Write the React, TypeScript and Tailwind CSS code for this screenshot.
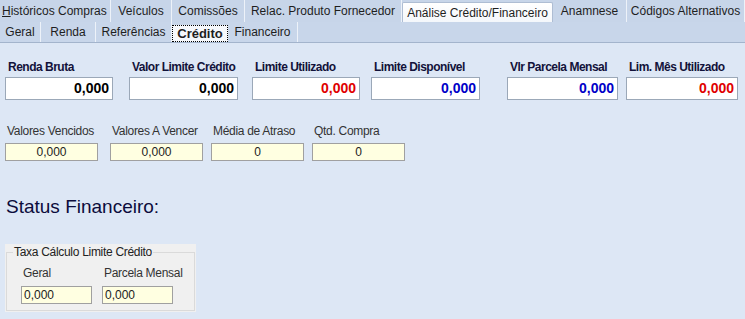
const font = { fontFamily: '"Liberation Sans", Arial, sans-serif' };

const topTabs = [
  { label: "Históricos Compras", w: "w-[111px]", first: true },
  { label: "Veículos", w: "w-[61px]" },
  { label: "Comissões", w: "w-[73px]" },
  { label: "Relac. Produto Fornecedor", w: "w-[157px]" },
  { label: "Análise Crédito/Financeiro", w: "w-[151px]", active: true },
  { label: "Anamnese", w: "w-[74px]" },
  { label: "Códigos Alternativos", w: "w-[118px]" },
];

const subTabs = [
  { label: "Geral", w: "w-[41px]" },
  { label: "Renda", w: "w-[55px]" },
  { label: "Referências", w: "w-[76px]" },
  { label: "Crédito", w: "w-[56px]", active: true },
  { label: "Financeiro", w: "w-[70px]" },
];

const mainFields = [
  { label: "Renda Bruta", w: "w-[108px]", ml: "ml-[5px]", color: "text-black" },
  { label: "Valor Limite Crédito", w: "w-[109px]", ml: "ml-[16px]", color: "text-black" },
  { label: "Limite Utilizado", w: "w-[108px]", ml: "ml-[14px]", color: "text-[#e00000]" },
  { label: "Limite Disponível", w: "w-[109px]", ml: "ml-[11px]", color: "text-[#0000c8]" },
  { label: "Vlr Parcela Mensal", w: "w-[111px]", ml: "ml-[27px]", color: "text-[#0000c8]" },
  { label: "Lim. Mês Utilizado", w: "w-[112px]", ml: "ml-[8px]", color: "text-[#e00000]" },
];

const infoFields = [
  { label: "Valores Vencidos", value: "0,000", ml: "ml-[5px]" },
  { label: "Valores A Vencer", value: "0,000", ml: "ml-[12px]" },
  { label: "Média de Atraso", value: "0", ml: "ml-[8px]" },
  { label: "Qtd. Compra", value: "0", ml: "ml-[8px]" },
];

export default function App() {
  return (
    <div className="w-[745px] h-[319px] overflow-hidden bg-[#dde7f5] text-[#1e1e1e]" style={font}>
      {/* abas principais */}
      <div className="flex h-[22px] bg-[#c7d5e9] text-[12px]">
        {topTabs.map((t) =>
          t.active ? (
            <div
              key={t.label}
              className={`${t.w} mt-[2px] flex items-center justify-center bg-gradient-to-b from-white to-[#f4f7fb] border-x border-t border-[#aebdd3] rounded-t-[2px]`}
            >
              {t.label}
            </div>
          ) : (
            <div
              key={t.label}
              className={`${t.w} flex items-center ${t.first ? "pl-[2px]" : "justify-center"} border-r border-[#edf2f9]`}
            >
              {t.first ? (
                <span>
                  <span className="underline">H</span>istóricos Compras
                </span>
              ) : (
                t.label
              )}
            </div>
          )
        )}
      </div>

      {/* sub abas */}
      <div className="flex h-[21px] bg-[#c8d6ea] border-b border-[#a3b4cc] text-[12px]">
        {subTabs.map((t) =>
          t.active ? (
            <div
              key={t.label}
              className={`${t.w} mt-[3px] flex items-center justify-center bg-[#f6f8fc] outline-1 outline-dotted outline-black -outline-offset-1 font-bold text-[13px]`}
            >
              {t.label}
            </div>
          ) : (
            <div
              key={t.label}
              className={`${t.w} flex items-center justify-center border-r border-[#edf2f9]`}
            >
              {t.label}
            </div>
          )
        )}
      </div>

      {/* limites */}
      <div className="flex pt-[17px]">
        {mainFields.map((f) => (
          <div key={f.label} className={`${f.ml} ${f.w} flex flex-col`}>
            <div className="pl-[3px] h-[14px] leading-[14px] text-[12px] font-bold tracking-[-0.5px] text-[#12123a] whitespace-nowrap">
              {f.label}
            </div>
            <div
              className={`mt-[3px] h-[23px] bg-white border border-[#9ba8b8] flex items-center justify-end pr-[3px] text-[14px] font-bold ${f.color}`}
            >
              0,000
            </div>
          </div>
        ))}
      </div>

      {/* valores */}
      <div className="flex mt-[24px]">
        {infoFields.map((f) => (
          <div key={f.label} className={`${f.ml} w-[93px] flex flex-col`}>
            <div className="pl-[2px] h-[14px] leading-[14px] text-[12px] text-[#333] tracking-[-0.3px] whitespace-nowrap">
              {f.label}
            </div>
            <div className="mt-[5px] h-[18px] bg-[#ffffe1] border border-[#a0a0a0] flex items-center justify-center text-[12px] text-[#222]">
              {f.value}
            </div>
          </div>
        ))}
      </div>

      <div className="mt-[35px] ml-[6px] h-[22px] leading-[22px] text-[19px] text-[#0c0c3c]">
        Status Financeiro:
      </div>

      {/* taxa calculo */}
      <div className="mt-[26px] ml-[5px] w-[191px] h-[68px] bg-[#f0f0f0] pt-[1px] px-[1px]">
        <fieldset className="border border-[#dadada] h-[66px] pl-[6px]">
          <legend className="px-[1px] text-[12px] leading-[14px] text-[#222] tracking-[-0.3px]">
            Taxa Cálculo Limite Crédito
          </legend>
          <div className="flex gap-[10px] mt-[7px] pl-[8px]">
            {["Geral", "Parcela Mensal"].map((l) => (
              <div key={l} className="w-[71px] flex flex-col">
                <div className="pl-[2px] h-[14px] leading-[14px] text-[12px] text-[#333] tracking-[-0.3px] whitespace-nowrap">
                  {l}
                </div>
                <div className="mt-[6px] h-[18px] bg-[#ffffe1] border border-[#a0a0a0] flex items-center pl-[2px] text-[12px] text-[#222]">
                  0,000
                </div>
              </div>
            ))}
          </div>
        </fieldset>
      </div>
    </div>
  );
}
